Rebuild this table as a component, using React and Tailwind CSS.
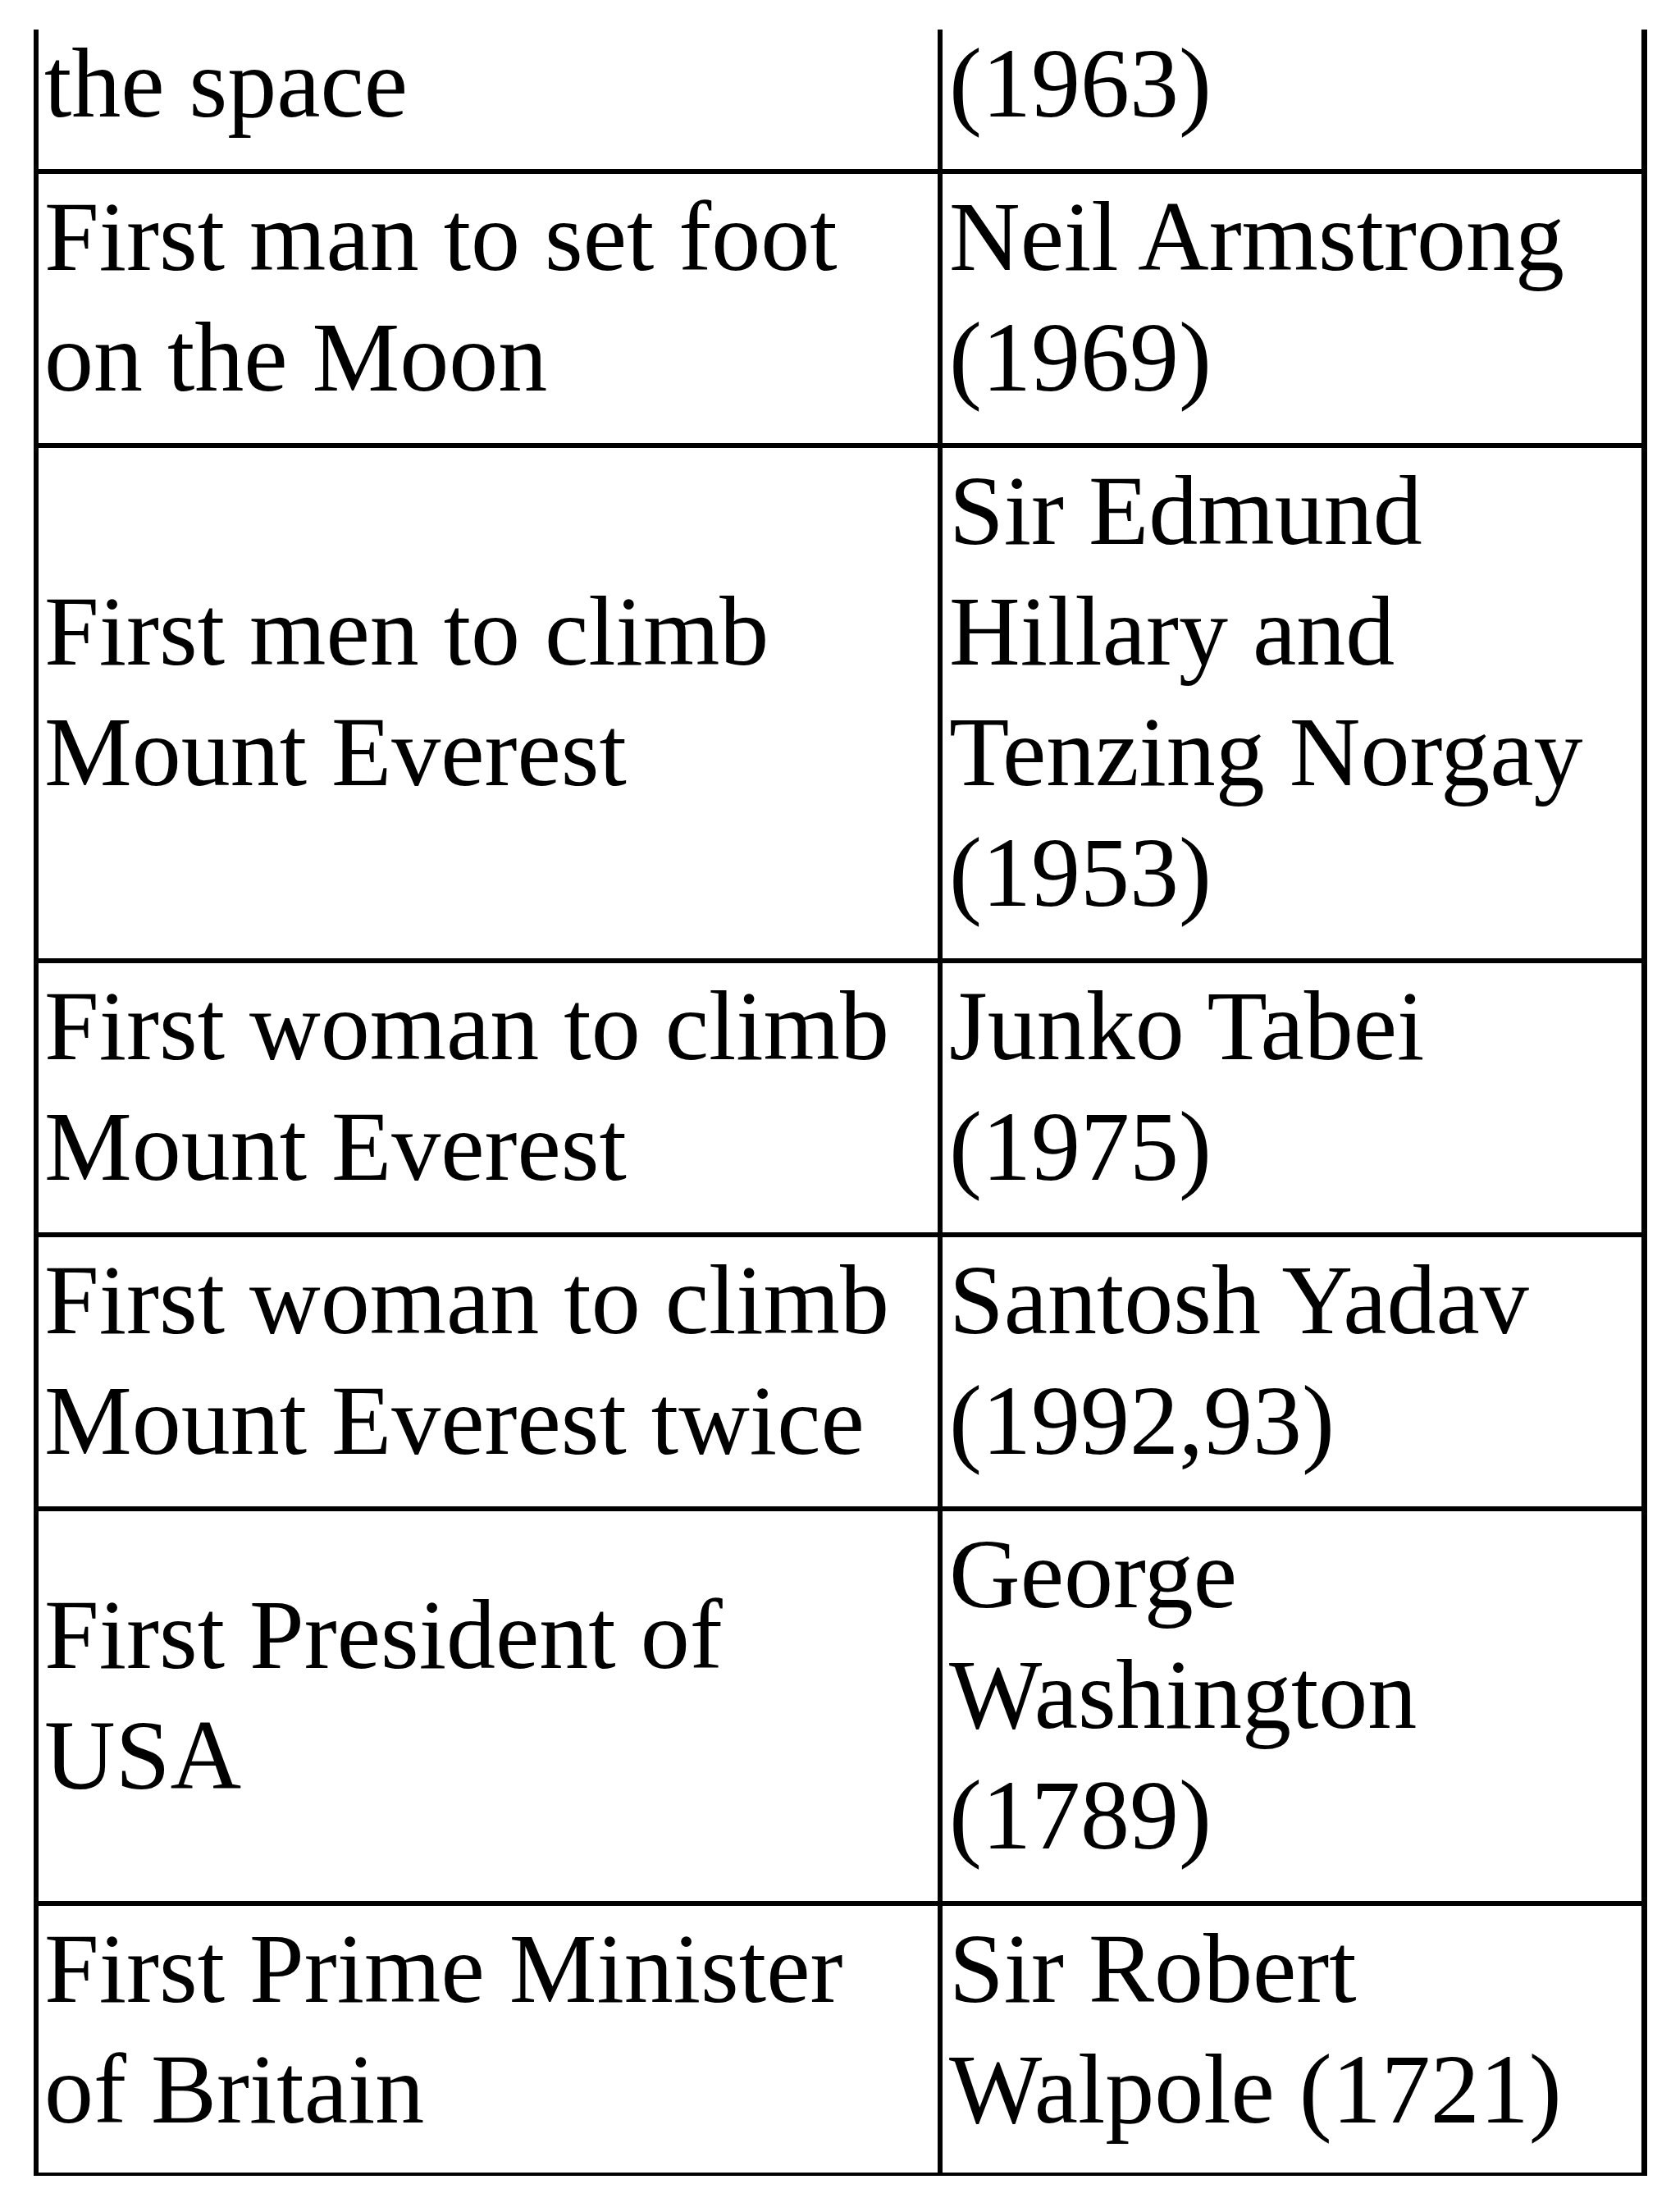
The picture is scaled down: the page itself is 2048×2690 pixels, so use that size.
const rows = [
  { left: ['the space'], right: ['(1963)'], cut: true },
  { left: ['First man to set foot', 'on the Moon'], right: ['Neil Armstrong', '(1969)'] },
  {
    left: ['First men to climb', 'Mount Everest'],
    right: ['Sir Edmund', 'Hillary and', 'Tenzing Norgay', '(1953)'],
  },
  { left: ['First woman to climb', 'Mount Everest'], right: ['Junko Tabei', '(1975)'] },
  { left: ['First woman to climb', 'Mount Everest twice'], right: ['Santosh Yadav', '(1992,93)'] },
  { left: ['First President of', 'USA'], right: ['George', 'Washington', '(1789)'] },
  { left: ['First Prime Minister', 'of Britain'], right: ['Sir Robert', 'Walpole (1721)'], last: true },
];

function Lines({ lines, cut }) {
  return (
    <div className={cut ? 'mt-[-8px]' : ''}>
      {lines.map((line, i) => (
        <div key={i} className="whitespace-nowrap">
          {line}
        </div>
      ))}
    </div>
  );
}

export default function App() {
  return (
    <div className="min-h-[2690px] w-[2048px] bg-white pt-[36px] text-black">
      <table className="ml-[41px] w-[1967px] table-fixed border-separate border-spacing-0 font-['Liberation_Serif','Times_New_Roman',serif] text-[120px] leading-[147px]">
        <colgroup>
          <col className="w-[1102px]" />
          <col className="w-[865px]" />
        </colgroup>
        <tbody>
          {rows.map((row, i) => {
            const pad = row.cut ? 'pt-0 pb-[31px]' : row.last ? 'pt-[3px] pb-[28px]' : 'pt-[3px] pb-[31px]';
            const bottom = row.last ? 'border-b-[4px]' : 'border-b-[6px]';
            return (
              <tr key={i}>
                <td className={`border-l-[6px] ${bottom} border-black pl-[7px] pr-[7px] align-middle ${pad}`}>
                  <Lines lines={row.left} cut={row.cut} />
                </td>
                <td className={`border-l-[6px] border-r-[7px] ${bottom} border-black pl-[8px] pr-[7px] align-middle ${pad}`}>
                  <Lines lines={row.right} cut={row.cut} />
                </td>
              </tr>
            );
          })}
        </tbody>
      </table>
    </div>
  );
}
